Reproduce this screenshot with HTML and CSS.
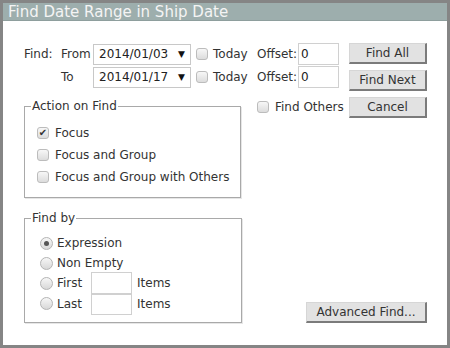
FILE: index.html
```html
<!DOCTYPE html>
<html lang="en">
<head>
  <meta charset="UTF-8" />
  <title>Find Date Range</title>
  <link rel="stylesheet" href="styles.css">
</head>
<body>
  <div class="dialog">
    <div class="title">Find Date Range in Ship Date</div>

    <div class="content">
      <div class="top">
        <div class="left">
          <div class="date-row">
            <span>Find:</span>
            <span>From</span>
            <div class="select">2014/01/03<span class="arrow">&#9660;</span></div>
            <span class="check"></span>
            <span>Today</span>
            <span>Offset:</span>
            <div class="input">0</div>
          </div>
          <div class="date-row">
            <span></span>
            <span>To</span>
            <div class="select">2014/01/17<span class="arrow">&#9660;</span></div>
            <span class="check"></span>
            <span>Today</span>
            <span>Offset:</span>
            <div class="input">0</div>
          </div>

          <div class="action-row">
            <fieldset class="group action">
              <legend>Action on Find</legend>
              <div class="opt"><span class="check checked">&#10004;</span>Focus</div>
              <div class="opt"><span class="check"></span>Focus and Group</div>
              <div class="opt"><span class="check"></span>Focus and Group with Others</div>
            </fieldset>
            <div class="find-others"><span class="check"></span>Find Others</div>
          </div>
        </div>

        <div class="buttons">
          <button class="btn">Find All</button>
          <button class="btn">Find Next</button>
          <button class="btn">Cancel</button>
        </div>
      </div>

      <div class="bottom">
        <fieldset class="group findby">
          <legend>Find by</legend>
          <div class="radio-row r1"><span class="radio on"></span>Expression</div>
          <div class="radio-row r2"><span class="radio"></span>Non Empty</div>
          <div class="radio-row r3">
            <span class="radio-lbl"><span class="radio"></span>First</span>
            <div class="input small"></div>
            <span class="items">Items</span>
          </div>
          <div class="radio-row r4">
            <span class="radio-lbl"><span class="radio"></span>Last</span>
            <div class="input small"></div>
            <span class="items">Items</span>
          </div>
        </fieldset>
        <button class="btn adv">Advanced Find...</button>
      </div>
    </div>
  </div>
</body>
</html>
```

FILE: styles.css
```css
* {
  margin: 0;
  padding: 0;
  box-sizing: border-box;
}

body {
  font-family: 'DejaVu Sans', Verdana, sans-serif;
  font-size: 12px;
  color: #333;
  background: #fff;
}

.dialog {
  width: 450px;
  height: 348px;
  border: 3px solid #858585;
  display: flex;
  flex-direction: column;
  background: #fff;
}

.title {
  height: 18px;
  background: #9daead;
  color: #f4f4f4;
  font-size: 15px;
  line-height: 18px;
  padding-left: 5px;
  border-bottom: 1px solid #8e9e9d;
}

.content {
  flex: 1;
  padding: 22px 20px 0 21px;
}

.top {
  display: flex;
  gap: 10px;
}

.left {
  width: 315px;
}

.date-row {
  display: grid;
  grid-template-columns: 37px 32px 98px 22px 44px 41px 41px;
  align-items: center;
  height: 21px;
  margin-bottom: 2px;
}

.select {
  height: 21px;
  border: 1px solid #c8c8c8;
  display: flex;
  align-items: center;
  justify-content: space-between;
  padding: 0 5px 0 5px;
  font-size: 12px;
  color: #222;
}

.arrow {
  font-size: 9px;
  color: #111;
}

.date-row .check {
  margin-left: 5px;
}

.input {
  height: 22px;
  border: 1px solid #d0d0d0;
  padding: 3px 0 0 2px;
  font-size: 12px;
  color: #222;
}

.check {
  display: inline-block;
  width: 12px;
  height: 12px;
  border: 1px solid #bcbcbc;
  border-radius: 3px;
  background: linear-gradient(#f7f7f7, #dcdcdc);
  vertical-align: middle;
  font-size: 10px;
  line-height: 10px;
  text-align: center;
  color: #333;
  flex-shrink: 0;
}

.action-row {
  display: flex;
  gap: 16px;
  margin-top: 12px;
}

.group {
  border: 1px solid #a9a9a9;
  box-shadow: inset 1px 1px 0 #fff, 1px 1px 0 #e6e6e6;
}

.group legend {
  padding: 0 1px;
  font-size: 12px;
  color: #333;
}

.action {
  width: 217px;
  flex-shrink: 0;
  padding: 9px 0 9px 12px;
}

.action legend {
  margin-left: -6px;
}

.opt {
  height: 22px;
  display: flex;
  align-items: center;
  gap: 6px;
}

.find-others {
  display: flex;
  align-items: center;
  gap: 6px;
  margin-top: 1px;
  height: 14px;
  white-space: nowrap;
}

.buttons {
  display: flex;
  flex-direction: column;
  gap: 6px;
}

.btn {
  width: 78px;
  height: 21px;
  font-family: inherit;
  font-size: 12px;
  color: #333;
  background: #e2e2e2;
  border: 1px solid #d6d6d6;
  border-right: 2px solid #7b7b7b;
  border-bottom: 2px solid #7b7b7b;
}

.bottom {
  display: flex;
  justify-content: space-between;
  align-items: flex-end;
  margin-top: 13px;
}

.findby {
  width: 218px;
  padding: 8px 0 8px 15px;
}

.findby legend {
  margin-left: -9px;
}

.radio-row {
  display: flex;
  align-items: center;
  gap: 4px;
}

.r1 { height: 20px; }
.r2 { height: 20px; }
.r3 { height: 20px; }
.r4 { height: 21px; }

.radio-lbl {
  width: 51px;
  display: flex;
  align-items: center;
  gap: 4px;
}

.radio {
  display: inline-block;
  width: 13px;
  height: 13px;
  border: 1px solid #b4b4b4;
  border-radius: 50%;
  background: linear-gradient(#f7f7f7, #d8d8d8);
  position: relative;
  flex-shrink: 0;
}

.radio.on::after {
  content: "";
  position: absolute;
  left: 3px;
  top: 3px;
  width: 5px;
  height: 5px;
  border-radius: 50%;
  background: #555;
}

.input.small {
  width: 41px;
  height: 22px;
  margin-left: -4px;
}

.r3 .input.small {
  height: 23px;
}

.items {
  margin-left: 1px;
}

.adv {
  width: 121px;
}
```
